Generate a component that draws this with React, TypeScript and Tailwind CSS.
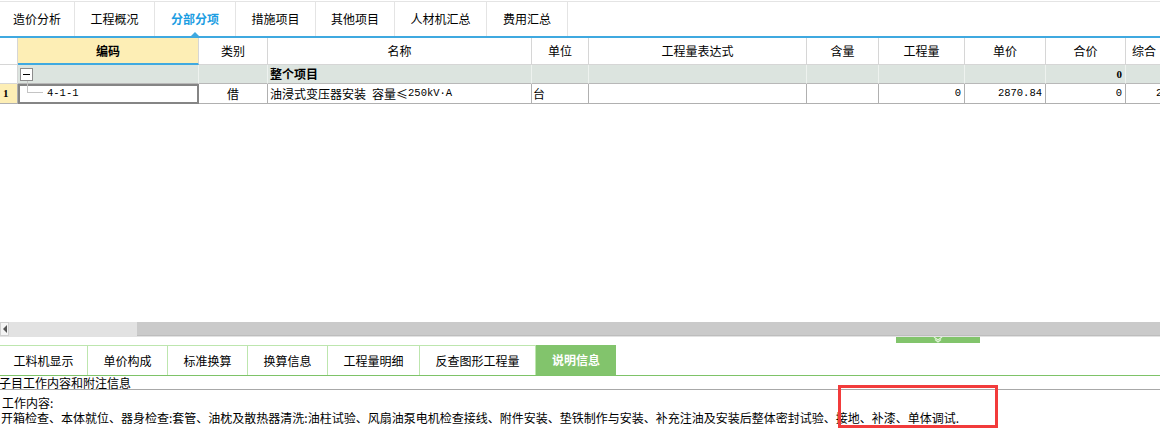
import React from "react";

const CJK = { fontFamily: '"Noto Sans CJK SC", "Noto Sans", sans-serif' };
const MONO = { fontFamily: '"Liberation Mono", "Noto Sans CJK SC", monospace' };

const topTabs: { label: string; w: number; active?: boolean }[] = [
  { label: "造价分析", w: 75 },
  { label: "工程概况", w: 80 },
  { label: "分部分项", w: 81, active: true },
  { label: "措施项目", w: 80 },
  { label: "其他项目", w: 79 },
  { label: "人材机汇总", w: 92 },
  { label: "费用汇总", w: 81 },
];

const bottomTabs: { label: string; w: number; active?: boolean }[] = [
  { label: "工料机显示", w: 88 },
  { label: "单价构成", w: 80 },
  { label: "标准换算", w: 80 },
  { label: "换算信息", w: 80 },
  { label: "工程量明细", w: 92 },
  { label: "反查图形工程量", w: 116 },
  { label: "说明信息", w: 80, active: true },
];

const cols = [18, 181, 69, 264, 57, 218, 72, 86, 81, 80, 78];
const headers = ["", "编码", "类别", "名称", "单位", "工程量表达式", "含量", "工程量", "单价", "合价", "综合"];

export default function App() {
  return (
    <div className="relative flex h-[431px] w-[1160px] flex-col overflow-hidden bg-white text-black" style={CJK}>
      {/* top tabs */}
      <div className="mt-px flex h-[35px] shrink-0 border-t border-[#e4e4e4]">
        {topTabs.map((t) => (
          <div
            key={t.label}
            className={`relative flex shrink-0 items-center justify-center border-r border-[#e4e4e4] text-[12px] ${
              t.active ? "font-bold text-[#1b9de2]" : "text-black"
            }`}
            style={{ width: t.w }}
          >
            {t.label}
            {t.active && (
              <div className="absolute bottom-0 left-1/2 h-0 w-0 -translate-x-1/2 border-x-[4px] border-b-[4px] border-x-transparent border-b-[#3fa9e0]" />
            )}
          </div>
        ))}
      </div>
      <div className="h-[2px] shrink-0 bg-[#3fa9e0]" />

      {/* header row */}
      <div className="flex h-[27px] shrink-0 text-[12px]">
        {headers.map((h, i) => (
          <div
            key={i}
            className={`flex shrink-0 items-center border-r border-[#d6d6d6] ${
              i === 10 ? "justify-start pl-[6px]" : "justify-center"
            } ${
              i === 1 ? "border-b-2 border-b-[#3fa9e0] bg-[#fdeeb5] font-bold" : "border-b border-b-[#d6d6d6]"
            }`}
            style={{ width: cols[i] }}
          >
            {h}
          </div>
        ))}
      </div>

      {/* group row */}
      <div className="flex h-[19px] shrink-0 text-[12px]">
        {cols.map((w, i) => (
          <div
            key={i}
            className={`flex shrink-0 items-center border-b border-r ${
              i === 0 ? "border-[#d6d6d6] bg-white" : "border-b-[#b8b8b8] border-r-[#eef2ef] bg-[#dce4df]"
            } ${i === 9 ? "justify-end pr-[3px]" : ""}`}
            style={{ width: w }}
          >
            {i === 1 && (
              <div className="ml-[2px] flex h-[13px] w-[13px] items-center justify-center border border-[#8c8c8c] bg-white">
                <div className="h-px w-[7px] bg-black" />
              </div>
            )}
            {i === 3 && <span className="pl-[2px] font-bold">整个项目</span>}
            {i === 9 && (
              <span className="text-[11px] font-bold" style={{ fontFamily: '"Liberation Serif", serif' }}>
                0
              </span>
            )}
          </div>
        ))}
      </div>

      {/* data row */}
      <div className="flex h-[20px] shrink-0 text-[12px]">
        <div className="flex w-[18px] shrink-0 items-center border-b border-r border-[#b0b0b0] bg-[#fdeeb5] pl-[3px] text-[11px] font-bold" style={{ fontFamily: '"Liberation Serif", serif' }}>
          1
        </div>
        <div className="relative flex w-[181px] shrink-0 items-center border-2 border-[#858585] bg-white">
          <div className="absolute left-[7px] top-[-5px] h-[11px] w-px bg-[#c4c4c4]" />
          <div className="absolute left-[7px] top-[6px] h-px w-[16px] bg-[#c4c4c4]" />
          <span className="ml-[27px] text-[10.5px]" style={MONO}>4-1-1</span>
        </div>
        <div className="flex w-[69px] shrink-0 items-center justify-center border-b border-r border-[#b0b0b0]">借</div>
        <div className="flex w-[264px] shrink-0 items-center border-b border-r border-[#b0b0b0] pl-[2px] whitespace-nowrap">
          油浸式变压器安装<span className="inline-block w-[6px]" /> 容量≤<span className="text-[10.5px]" style={MONO}>250kV·A</span>
        </div>
        <div className="flex w-[57px] shrink-0 items-center border-b border-r border-[#b0b0b0] pl-[1px]">台</div>
        <div className="w-[218px] shrink-0 border-b border-r border-[#b0b0b0]" />
        <div className="w-[72px] shrink-0 border-b border-r border-[#b0b0b0]" />
        <div className="flex w-[86px] shrink-0 items-center justify-end border-b border-r border-[#b0b0b0] pr-[3px] text-[10.5px]" style={MONO}>0</div>
        <div className="flex w-[81px] shrink-0 items-center justify-end border-b border-r border-[#b0b0b0] pr-[3px] text-[10.5px]" style={MONO}>2870.84</div>
        <div className="flex w-[80px] shrink-0 items-center justify-end border-b border-r border-[#b0b0b0] pr-[3px] text-[10.5px]" style={MONO}>0</div>
        <div className="flex w-[78px] shrink-0 items-center justify-end border-b border-r border-[#b0b0b0] pr-[3px] text-[10.5px]" style={MONO}>2870.84</div>
      </div>

      <div className="flex-1" />

      {/* horizontal scrollbar */}
      <div className="flex h-[14px] shrink-0">
        <div className="flex w-[9px] shrink-0 items-center justify-center border border-[#d0d0d0] bg-[#f4f4f4]">
          <div className="h-0 w-0 border-y-[4px] border-r-[4px] border-y-transparent border-r-[#555]" />
        </div>
        <div className="w-[128px] shrink-0 bg-[#e2e2e2]" />
        <div className="flex-1 border-b border-[#bdbdbd] bg-[#cacaca]" />
      </div>

      {/* splitter handle */}
      <div className="flex h-[9px] shrink-0 border-t border-[#e2e2e2]">
        <div className="ml-[896px] flex h-[6px] w-[84px] items-start justify-center bg-[#82c46c]">
          <svg width="10" height="6" viewBox="0 0 10 6">
            <polyline points="1,0 5,3 9,0" fill="none" stroke="#dff2d7" strokeWidth="1.2" />
            <polyline points="2,2.5 5,5 8,2.5" fill="none" stroke="#dff2d7" strokeWidth="1.2" />
          </svg>
        </div>
      </div>

      {/* bottom tabs */}
      <div className="flex h-[31px] shrink-0 border-b border-[#7ec368]">
        {bottomTabs.map((t) => (
          <div
            key={t.label}
            className={`flex shrink-0 items-center justify-center text-[12px] ${
              t.active
                ? "bg-[#82c46c] font-bold text-white"
                : "border-r border-t border-[#bde6ae] text-black"
            }`}
            style={{ width: t.w }}
          >
            {t.label}
          </div>
        ))}
      </div>

      {/* info header */}
      <div className="flex h-[14px] shrink-0 items-center border-b border-[#a8a8a8] text-[12px] leading-[13px]">
        <span className="-ml-px">子目工作内容和附注信息</span>
      </div>

      {/* content */}
      <div className="flex-none pt-[5px] text-[12px] leading-[15px]" style={{ height: 41 }}>
        <div className="pl-[2px]">工作内容:</div>
        <div className="whitespace-nowrap pl-px">
          开箱检查、本体就位、器身检查:套管、油枕及散热器清洗:油柱试验、风扇油泵电机检查接线、附件安装、垫铁制作与安装、补充注油及安装后整体密封试验、接地、补漆、单体调试.
        </div>
      </div>

      {/* red annotation box */}
      <div className="pointer-events-none absolute left-[838px] top-[385px] h-[43px] w-[160px] border-[3px] border-[#f23b3b]" />
    </div>
  );
}
